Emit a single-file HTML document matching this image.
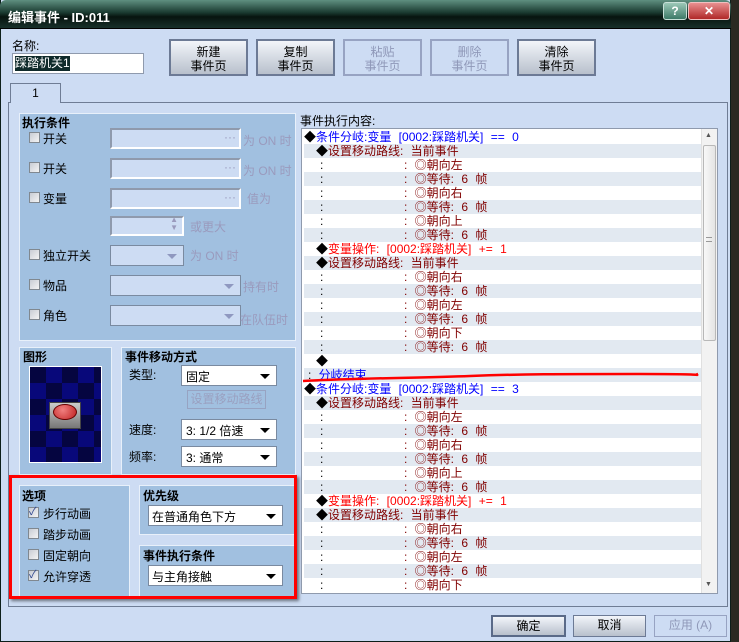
<!DOCTYPE html>
<html><head><meta charset="utf-8"><style>
*{margin:0;padding:0;box-sizing:border-box}
body{width:739px;height:642px;overflow:hidden;background:#2a2a22;font-family:"Liberation Sans","Noto Sans CJK SC",sans-serif;font-size:12px;color:#000;position:relative}
.a{position:absolute;white-space:nowrap}
.win{position:absolute;left:0;top:0;width:731px;height:642px;background:#cddcf3;border:1px solid #0d1f1a;border-top:none}
.title{position:absolute;left:0;top:0;width:731px;height:29px;background:linear-gradient(#5f8f80,#1a3a30 45%,#07140f 60%,#17302a);border-radius:6px 6px 0 0;border-bottom:1px solid #000}
.btn{position:absolute;background:linear-gradient(#f2f5fa,#b8c0cc);border:2px solid #6c7a95;text-align:center;line-height:14px;font-size:12px}
.dis{background:transparent;color:#8f98b8;border:2px solid #97a3c2}
.pan{position:absolute;background:#a1c0e0;border:1px solid #e8f0fa}
.in{position:absolute;background:#cddcf3;border:2px solid #8f9aad;border-right-color:#fff;border-bottom-color:#fff}
.dd{position:absolute;background:#fff;border:1px solid #7a8aa0}
.dd::after{content:"";position:absolute;right:6px;top:8px;border:5px solid transparent;border-top:5px solid #000;border-bottom:0}
.ddg::after{border-top-color:#8f98c0}
.cb{position:absolute;width:11px;height:11px;background:linear-gradient(135deg,#c8ccd4,#f4f4f4);border:1px solid #808890}
.g{color:#9a9abd}
.b{font-weight:bold}
.list{word-spacing:4px}
.row{position:absolute;left:0;width:398px;height:14px;line-height:14px}
.bl{color:#0000ff}.dr{color:#800000}.rd{color:#ff0000}
</style></head><body>
<div class="win"></div>
<div class="title"></div>
<div class="a b" style="left:8px;top:7px;color:#fff;font-size:13px">编辑事件 - ID:011</div>
<div class="a" style="left:663px;top:2px;width:24px;height:18px;background:linear-gradient(#9cc8b8,#3d7a68);border:1px solid #c8e0d8;border-radius:3px;color:#fff;text-align:center;font-weight:bold;line-height:16px">?</div>
<div class="a" style="left:688px;top:2px;width:42px;height:18px;background:linear-gradient(#e89090,#b02828);border:1px solid #f0c0c0;border-radius:3px;color:#fff;text-align:center;font-weight:bold;line-height:16px">✕</div>

<div class="a" style="left:12px;top:37px">名称:</div>
<div class="a" style="left:12px;top:53px;width:132px;height:21px;background:#fff;border:1px solid #8f9aad"><span style="position:absolute;left:2px;top:2px;background:#0f2a2a;color:#fff;line-height:15px">踩踏机关1</span></div>
<div class="btn" style="left:169px;top:39px;width:79px;height:37px;padding-top:4px">新建<br>事件页</div>
<div class="btn" style="left:256px;top:39px;width:79px;height:37px;padding-top:4px">复制<br>事件页</div>
<div class="btn dis" style="left:343px;top:39px;width:79px;height:37px;padding-top:4px">粘贴<br>事件页</div>
<div class="btn dis" style="left:430px;top:39px;width:79px;height:37px;padding-top:4px">删除<br>事件页</div>
<div class="btn" style="left:517px;top:39px;width:79px;height:37px;padding-top:4px">清除<br>事件页</div>

<div class="a" style="left:8px;top:102px;width:720px;height:505px;border:1px solid #6f7d95"></div>
<div class="a" style="left:10px;top:83px;width:51px;height:20px;background:#cddcf3;border:1px solid #6f7d95;border-bottom:none;text-align:center;line-height:18px">1</div>

<!-- conditions -->
<div class="pan" style="left:19px;top:113px;width:277px;height:228px"></div>
<div class="a b" style="left:22px;top:114px">执行条件</div>
<div class="cb" style="left:29px;top:132px"></div><div class="a" style="left:43px;top:130px">开关</div>
<div class="in" style="left:110px;top:128px;width:131px;height:21px"><span class="a g" style="right:3px;top:0px">···</span></div><div class="a g" style="left:243px;top:132px">为 ON 时</div>
<div class="cb" style="left:29px;top:162px"></div><div class="a" style="left:43px;top:160px">开关</div>
<div class="in" style="left:110px;top:158px;width:131px;height:21px"><span class="a g" style="right:3px;top:0px">···</span></div><div class="a g" style="left:243px;top:162px">为 ON 时</div>
<div class="cb" style="left:29px;top:192px"></div><div class="a" style="left:43px;top:190px">变量</div>
<div class="in" style="left:110px;top:188px;width:131px;height:21px"><span class="a g" style="right:3px;top:0px">···</span></div><div class="a g" style="left:247px;top:190px">值为</div>
<div class="in" style="left:110px;top:216px;width:74px;height:20px"><span class="a g" style="right:4px;top:-2px;font-size:8px;line-height:8px">▲<br>▼</span></div><div class="a g" style="left:190px;top:218px">或更大</div>
<div class="cb" style="left:29px;top:249px"></div><div class="a" style="left:43px;top:247px">独立开关</div>
<div class="in dd ddg" style="left:110px;top:245px;width:74px;height:21px;background:#cddcf3"></div><div class="a g" style="left:190px;top:247px">为 ON 时</div>
<div class="cb" style="left:29px;top:279px"></div><div class="a" style="left:43px;top:277px">物品</div>
<div class="in dd ddg" style="left:110px;top:275px;width:131px;height:21px;background:#cddcf3"></div><div class="a g" style="left:243px;top:278px">持有时</div>
<div class="cb" style="left:29px;top:309px"></div><div class="a" style="left:43px;top:307px">角色</div>
<div class="in dd ddg" style="left:110px;top:305px;width:131px;height:21px;background:#cddcf3"></div><div class="a g" style="left:240px;top:311px">在队伍时</div>

<!-- graphic -->
<div class="pan" style="left:19px;top:347px;width:93px;height:128px"></div>
<div class="a b" style="left:23px;top:348px">图形</div>
<div class="a" style="left:29px;top:366px;width:73px;height:97px;border:1px solid #fff;background-color:#050540;background-image:linear-gradient(45deg,#08087a 25%,transparent 25%,transparent 75%,#08087a 75%),linear-gradient(45deg,#08087a 25%,transparent 25%,transparent 75%,#08087a 75%);background-size:32px 32px;background-position:0 0,16px 16px"></div>
<div class="a" style="left:49px;top:402px;width:32px;height:27px;background:linear-gradient(#ccc,#777);border:1px solid #444"></div>
<div class="a" style="left:53px;top:404px;width:24px;height:16px;border-radius:50%;background:radial-gradient(circle at 40% 35%,#f08080,#c02020);border:1px solid #600"></div>

<!-- movement -->
<div class="pan" style="left:121px;top:347px;width:175px;height:128px"></div>
<div class="a b" style="left:125px;top:348px">事件移动方式</div>
<div class="a" style="left:129px;top:366px">类型:</div>
<div class="dd" style="left:181px;top:365px;width:96px;height:21px"><span class="a" style="left:4px;top:2px">固定</span></div>
<div class="a" style="left:187px;top:390px;width:79px;height:19px;border:1px solid #97a3c2;color:#9aa0c0;text-align:center;line-height:17px">设置移动路线</div>
<div class="a" style="left:129px;top:421px">速度:</div>
<div class="dd" style="left:181px;top:419px;width:96px;height:21px"><span class="a" style="left:4px;top:2px">3: 1/2 倍速</span></div>
<div class="a" style="left:129px;top:448px">频率:</div>
<div class="dd" style="left:181px;top:446px;width:96px;height:21px"><span class="a" style="left:4px;top:2px">3: 通常</span></div>

<!-- options -->
<div class="pan" style="left:19px;top:485px;width:111px;height:112px"></div>
<div class="a b" style="left:22px;top:487px">选项</div>
<div class="cb" style="left:28px;top:507px"></div><div class="a" style="left:29px;top:503px;color:#304890;font-size:11px">✓</div><div class="a" style="left:43px;top:505px">步行动画</div>
<div class="cb" style="left:28px;top:528px"></div><div class="a" style="left:43px;top:526px">踏步动画</div>
<div class="cb" style="left:28px;top:549px"></div><div class="a" style="left:43px;top:547px">固定朝向</div>
<div class="cb" style="left:28px;top:570px"></div><div class="a" style="left:29px;top:566px;color:#304890;font-size:11px">✓</div><div class="a" style="left:43px;top:568px">允许穿透</div>
<div class="pan" style="left:139px;top:485px;width:156px;height:50px"></div>
<div class="a b" style="left:143px;top:487px">优先级</div>
<div class="dd" style="left:148px;top:505px;width:135px;height:21px"><span class="a" style="left:3px;top:2px">在普通角色下方</span></div>
<div class="pan" style="left:139px;top:545px;width:156px;height:52px"></div>
<div class="a b" style="left:143px;top:547px">事件执行条件</div>
<div class="dd" style="left:148px;top:565px;width:135px;height:21px"><span class="a" style="left:3px;top:2px">与主角接触</span></div>
<div class="a" style="left:9px;top:475px;width:288px;height:124px;border:3px solid #ff0000;box-shadow:2px 2px 3px rgba(0,0,0,.5)"></div>

<!-- list -->
<div class="a" style="left:300px;top:112px">事件执行内容:</div>
<div class="a list" style="left:301px;top:128px;width:417px;height:466px;background:#fff;border:1px solid #8f9aad;overflow:hidden">
<div style="position:absolute;left:2px;top:1px;width:398px">
<div class="row" style="top:0"><span class="a">◆<span class="bl">条件分岐:变量 [0002:踩踏机关] == 0</span></span></div>
<div class="row" style="top:14px;background:#e2e9f1"><span class="a" style="left:12px">◆<span class="dr">设置移动路线: 当前事件</span></span></div>
<div class="row" style="top:28px"><span class="a" style="left:16px">:</span><span class="a dr" style="left:100px">: ◎朝向左</span></div>
<div class="row" style="top:42px;background:#e2e9f1"><span class="a" style="left:16px">:</span><span class="a dr" style="left:100px">: ◎等待: 6 帧</span></div>
<div class="row" style="top:56px"><span class="a" style="left:16px">:</span><span class="a dr" style="left:100px">: ◎朝向右</span></div>
<div class="row" style="top:70px;background:#e2e9f1"><span class="a" style="left:16px">:</span><span class="a dr" style="left:100px">: ◎等待: 6 帧</span></div>
<div class="row" style="top:84px"><span class="a" style="left:16px">:</span><span class="a dr" style="left:100px">: ◎朝向上</span></div>
<div class="row" style="top:98px;background:#e2e9f1"><span class="a" style="left:16px">:</span><span class="a dr" style="left:100px">: ◎等待: 6 帧</span></div>
<div class="row" style="top:112px"><span class="a" style="left:12px">◆<span class="rd">变量操作: [0002:踩踏机关] += 1</span></span></div>
<div class="row" style="top:126px;background:#e2e9f1"><span class="a" style="left:12px">◆<span class="dr">设置移动路线: 当前事件</span></span></div>
<div class="row" style="top:140px"><span class="a" style="left:16px">:</span><span class="a dr" style="left:100px">: ◎朝向右</span></div>
<div class="row" style="top:154px;background:#e2e9f1"><span class="a" style="left:16px">:</span><span class="a dr" style="left:100px">: ◎等待: 6 帧</span></div>
<div class="row" style="top:168px"><span class="a" style="left:16px">:</span><span class="a dr" style="left:100px">: ◎朝向左</span></div>
<div class="row" style="top:182px;background:#e2e9f1"><span class="a" style="left:16px">:</span><span class="a dr" style="left:100px">: ◎等待: 6 帧</span></div>
<div class="row" style="top:196px"><span class="a" style="left:16px">:</span><span class="a dr" style="left:100px">: ◎朝向下</span></div>
<div class="row" style="top:210px;background:#e2e9f1"><span class="a" style="left:16px">:</span><span class="a dr" style="left:100px">: ◎等待: 6 帧</span></div>
<div class="row" style="top:224px"><span class="a" style="left:12px">◆</span></div>
<div class="row" style="top:238px;background:#e2e9f1"><span class="a" style="left:4px">: <span class="bl">分岐结束</span></span></div>
<div class="row" style="top:252px"><span class="a">◆<span class="bl">条件分岐:变量 [0002:踩踏机关] == 3</span></span></div>
<div class="row" style="top:266px;background:#e2e9f1"><span class="a" style="left:12px">◆<span class="dr">设置移动路线: 当前事件</span></span></div>
<div class="row" style="top:280px"><span class="a" style="left:16px">:</span><span class="a dr" style="left:100px">: ◎朝向左</span></div>
<div class="row" style="top:294px;background:#e2e9f1"><span class="a" style="left:16px">:</span><span class="a dr" style="left:100px">: ◎等待: 6 帧</span></div>
<div class="row" style="top:308px"><span class="a" style="left:16px">:</span><span class="a dr" style="left:100px">: ◎朝向右</span></div>
<div class="row" style="top:322px;background:#e2e9f1"><span class="a" style="left:16px">:</span><span class="a dr" style="left:100px">: ◎等待: 6 帧</span></div>
<div class="row" style="top:336px"><span class="a" style="left:16px">:</span><span class="a dr" style="left:100px">: ◎朝向上</span></div>
<div class="row" style="top:350px;background:#e2e9f1"><span class="a" style="left:16px">:</span><span class="a dr" style="left:100px">: ◎等待: 6 帧</span></div>
<div class="row" style="top:364px"><span class="a" style="left:12px">◆<span class="rd">变量操作: [0002:踩踏机关] += 1</span></span></div>
<div class="row" style="top:378px;background:#e2e9f1"><span class="a" style="left:12px">◆<span class="dr">设置移动路线: 当前事件</span></span></div>
<div class="row" style="top:392px"><span class="a" style="left:16px">:</span><span class="a dr" style="left:100px">: ◎朝向右</span></div>
<div class="row" style="top:406px;background:#e2e9f1"><span class="a" style="left:16px">:</span><span class="a dr" style="left:100px">: ◎等待: 6 帧</span></div>
<div class="row" style="top:420px"><span class="a" style="left:16px">:</span><span class="a dr" style="left:100px">: ◎朝向左</span></div>
<div class="row" style="top:434px;background:#e2e9f1"><span class="a" style="left:16px">:</span><span class="a dr" style="left:100px">: ◎等待: 6 帧</span></div>
<div class="row" style="top:448px"><span class="a" style="left:16px">:</span><span class="a dr" style="left:100px">: ◎朝向下</span></div>
</div>
<div class="a" style="left:399px;top:0;width:16px;height:464px;background:#f2f2f2;border-left:1px solid #e0e0e0"></div>
<div class="a" style="left:401px;top:16px;width:13px;height:196px;background:linear-gradient(90deg,#f8f8f8,#e4e4e4);border:1px solid #b8b8b8;border-radius:2px"></div>
<div class="a" style="left:403px;top:3px;font-size:7px;color:#555">▲</div>
<div class="a" style="left:403px;top:452px;font-size:7px;color:#555">▼</div>
<div class="a" style="left:404px;top:108px;width:6px;height:5px;border-top:1px solid #999;border-bottom:1px solid #999"></div>
</div>
<svg class="a" style="left:0;top:0" width="739" height="642"><path d="M303 381 C360 378 420 378 470 376 S560 374 640 374 S690 376 698 374" stroke="#ff0000" stroke-width="2.5" fill="none"/></svg>

<div class="btn" style="left:491px;top:615px;width:75px;height:22px;line-height:18px;border-color:#5a6a88">确定</div>
<div class="btn" style="left:573px;top:615px;width:73px;height:22px;line-height:18px;border-width:1px">取消</div>
<div class="btn dis" style="left:654px;top:615px;width:73px;height:22px;line-height:18px;border-width:1px">应用 (A)</div>
</body></html>
